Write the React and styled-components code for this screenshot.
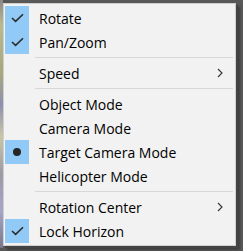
import React from 'react'
import styled, { createGlobalStyle } from 'styled-components'

const GlobalStyle = createGlobalStyle`
  html, body {
    margin: 0;
    padding: 0;
    background: #585858;
  }
`;

const items = [
    { label: 'Rotate', mark: 'check' },
    { label: 'Pan/Zoom', mark: 'check' },
    { sep: true },
    { label: 'Speed', sub: true },
    { sep: true },
    { label: 'Object Mode' },
    { label: 'Camera Mode' },
    { label: 'Target Camera Mode', mark: 'dot' },
    { label: 'Helicopter Mode' },
    { sep: true },
    { label: 'Rotation Center', sub: true },
    { label: 'Lock Horizon', mark: 'check' },
];

function Check() {
    return (
        <svg width="13" height="10" viewBox="0 0 13 10">
            <path d="M1 5 L4.6 8.4 L12 1.2" fill="none" stroke="#2b2b2b" strokeWidth="1.6" />
        </svg>
    )
}

function Chevron() {
    return (
        <svg width="6" height="10" viewBox="0 0 6 10">
            <path d="M1 1 L5 5 L1 9" fill="none" stroke="#333" strokeWidth="1.1" />
        </svg>
    )
}

export default function App() {
    return (
        <Page>
            <GlobalStyle />
            <LeftStrip />
            <Menu>
                {items.map((it, i) => it.sep ? (
                    <Separator key={i} />
                ) : (
                    <Item key={i}>
                        <MarkBox $on={!!it.mark}>
                            {it.mark === 'check' && <Check />}
                            {it.mark === 'dot' && <Dot />}
                        </MarkBox>
                        <Label>{it.label}</Label>
                        <Arrow>{it.sub && <Chevron />}</Arrow>
                    </Item>
                ))}
            </Menu>
        </Page>
    )
}

const Page = styled.div`
    display: flex;
    align-items: flex-start;
    width: 243px;
    height: 251px;
    padding-top: 3px;
    box-sizing: border-box;
    overflow: hidden;
`;

const LeftStrip = styled.div`
    width: 3px;
    height: 248px;
    margin-top: -3px;
    background: linear-gradient(180deg, #8a8a8a 0%, #b9b98e 10%, #a7a77e 30%, #8e8fb0 42%, #c9c6a6 55%, #9b9aa6 70%, #a7a5c9 85%, #77778a 100%);
`;

const Menu = styled.div`
    width: 233px;
    height: 243px;
    box-sizing: border-box;
    background: #f2f2f2;
    border: 1px solid #cfcfcf;
    padding: 2px 0 2px 1px;
    box-shadow: 2px 2px 0 #444, 4px 4px 2px #3e3e3e;
    display: flex;
    flex-direction: column;
    font-family: "Open Sans", "Noto Sans", sans-serif;
    font-size: 14px;
    color: #000;
`;

const Item = styled.div`
    display: flex;
    align-items: center;
    height: 24px;
`;

const MarkBox = styled.div`
    width: 24px;
    height: 24px;
    display: flex;
    align-items: center;
    justify-content: center;
    background: ${p => p.$on ? '#91c9f7' : 'transparent'};
`;

const Dot = styled.span`
    width: 8px;
    height: 8px;
    border-radius: 50%;
    background: #262626;
`;

const Label = styled.span`
    flex: 1;
    padding-left: 10px;
    white-space: nowrap;
`;

const Arrow = styled.div`
    width: 24px;
    display: flex;
    align-items: center;
    justify-content: flex-end;
    padding-right: 12px;
`;

const Separator = styled.div`
    height: 1px;
    background: #d7d7d7;
    margin: 3px 2px 3px 30px;
`;
